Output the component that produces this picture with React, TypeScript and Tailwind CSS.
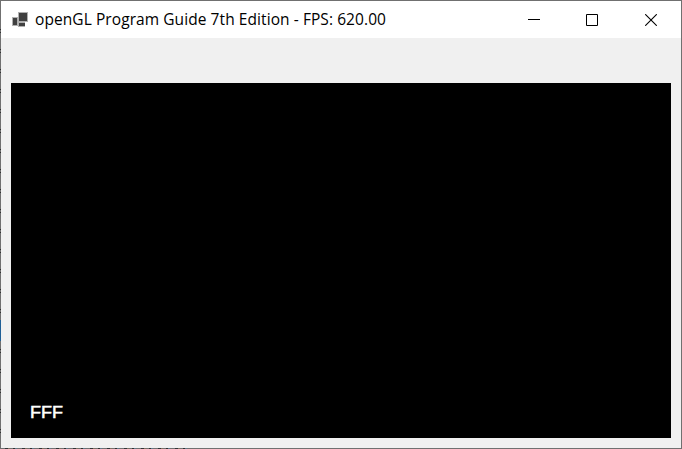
const TITLE = 'openGL Program Guide 7th Edition - FPS: 620.00';

function AppIcon() {
  return (
    <svg width="16" height="16" viewBox="0 0 16 16" shapeRendering="crispEdges" className="shrink-0">
      <path fill="#b0b0b0" d="M6 0h10v10H6zM0 5h6v9H0zM6 10h7v5H6z" />
      <path fill="#404040" d="M7 1h8v8H7zM1 6h4v7H1zM7 11h6v3H7z" />
    </svg>
  );
}

function TitleBar() {
  return (
    <header className="flex h-[37px] shrink-0 items-center bg-white pl-[11px]">
      <AppIcon />
      <h1 className="-mt-px ml-[7px] flex-1 whitespace-pre font-['Open_Sans','Noto_Sans',sans-serif] text-[15.5px] leading-6 tracking-[0.075px] text-black">
        {TITLE}
      </h1>
      <div className="flex h-full shrink-0 items-center">
        <button aria-label="Minimize" className="flex h-full w-[58px] items-center justify-center">
          <svg width="12" height="12" shapeRendering="crispEdges">
            <path d="M0 5h12v1H0z" />
          </svg>
        </button>
        <button aria-label="Maximize" className="flex h-full w-[58px] items-center justify-center">
          <svg width="12" height="12" fill="none" stroke="black">
            <path d="M.5 .5h11v11H.5z" />
          </svg>
        </button>
        <button aria-label="Close" className="flex h-full w-[60px] items-center justify-center">
          <svg width="12" height="12" fill="none" stroke="black" strokeWidth="1.1">
            <path d="M.2 .2l11.6 11.6M11.8 .2L.2 11.8" />
          </svg>
        </button>
      </div>
    </header>
  );
}

/* Desktop content that shows through the one-pixel translucent window frame. */
function LeftFrame() {
  return (
    <div className="flex w-px shrink-0 flex-col bg-[#707070]">
      <div className="mt-[18px] h-[301px] bg-[repeating-linear-gradient(to_bottom,#707070_0_10px,#303030_10px_11px,#707070_11px_13px,#303030_13px_14px,#707070_14px_20px)]" />
      <div className="h-[21px] bg-[#1f5f96]" />
      <div className="flex-1 bg-[repeating-linear-gradient(to_bottom,#707070_0_8px,#303030_8px_9px,#707070_9px_11px,#303030_11px_12px,#707070_12px_20px)]" />
    </div>
  );
}

function BottomFrame() {
  return (
    <div className="flex h-px shrink-0 bg-[#707070]">
      <div className="w-[190px] bg-[repeating-linear-gradient(to_right,#707070_0_5px,#303438_5px_8px,#807060_8px_10px,#707070_10px_13px,#303030_13px_15px,#60788c_15px_17px)]" />
    </div>
  );
}

export default function App() {
  return (
    <div className="flex h-[449px] w-[682px] flex-col overflow-hidden border-r border-t border-[#707070] bg-[#f0f0f0]">
      <div className="flex min-h-0 flex-1">
        <LeftFrame />
        <div className="flex min-w-0 flex-1 flex-col">
          <TitleBar />
          <main className="mx-[10px] mb-[10px] mt-[45px] flex flex-1 items-end bg-black pb-[13px] pl-[18.8px]">
            <span className="origin-left scale-x-[1.06] font-['Liberation_Sans',sans-serif] text-[17px] leading-6 text-white [-webkit-text-stroke:0.5px_white]">
              FFF
            </span>
          </main>
        </div>
      </div>
      <BottomFrame />
    </div>
  );
}
